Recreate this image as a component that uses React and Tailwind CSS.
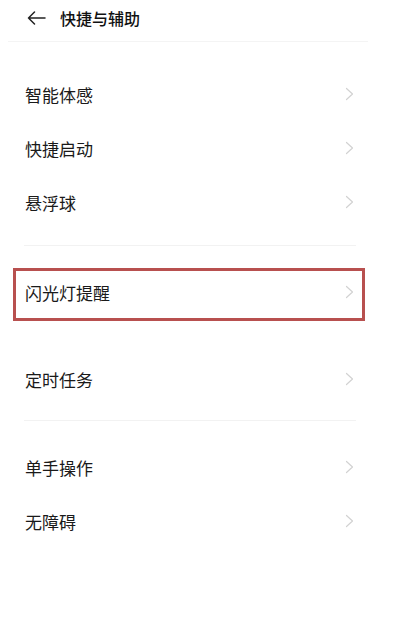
import React from "react";

const font = { fontFamily: '"Noto Sans CJK SC", "Noto Sans", sans-serif' };

function Chevron() {
  return (
    <svg width="9" height="14" viewBox="0 0 9 14" fill="none" className="shrink-0">
      <path d="M1.5 1.5 L7.5 7 L1.5 12.5" stroke="#d2d2d2" strokeWidth="1.2" strokeLinecap="round" strokeLinejoin="round" />
    </svg>
  );
}

function Row({ label }) {
  return (
    <div className="flex h-[54px] items-center justify-between pl-[25px] pr-[46px]">
      <span className="text-[17px] leading-none text-[#1a1a1a]">{label}</span>
      <Chevron />
    </div>
  );
}

function Divider() {
  return <div className="mx-[24px] h-px w-[332px] bg-[#f2f2f2]" />;
}

export default function App() {
  return (
    <div className="h-[622px] w-[400px] overflow-hidden bg-white" style={font}>
      <div className="flex h-[41px] items-center pl-[27px] pb-[6px]">
        <svg width="19" height="14" viewBox="0 0 19 14" fill="none">
          <path d="M18 7 H1.5 M7.5 1 L1.5 7 L7.5 13" stroke="#222" strokeWidth="1.5" strokeLinecap="round" strokeLinejoin="round" />
        </svg>
        <span className="ml-[14px] text-[16px] font-medium leading-none text-[#111]">快捷与辅助</span>
      </div>
      <div className="mx-[8px] h-px w-[360px] bg-[#f4f4f4]" />
      <div className="pt-[25px]">
        <Row label="智能体感" />
        <Row label="快捷启动" />
        <Row label="悬浮球" />
      </div>
      <div className="mt-[16px]">
        <Divider />
      </div>
      <div className="mt-[22px] ml-[13px] flex h-[53px] w-[352px] items-center justify-between border-[3px] border-[#b8504f] pl-[9px] pr-[8px] pb-[5px]">
        <span className="text-[17px] leading-none text-[#1a1a1a]">闪光灯提醒</span>
        <Chevron />
      </div>
      <div className="mt-[31px]">
        <Row label="定时任务" />
      </div>
      <div className="mt-[14px]">
        <Divider />
      </div>
      <div className="mt-[19px]">
        <Row label="单手操作" />
        <Row label="无障碍" />
      </div>
    </div>
  );
}
